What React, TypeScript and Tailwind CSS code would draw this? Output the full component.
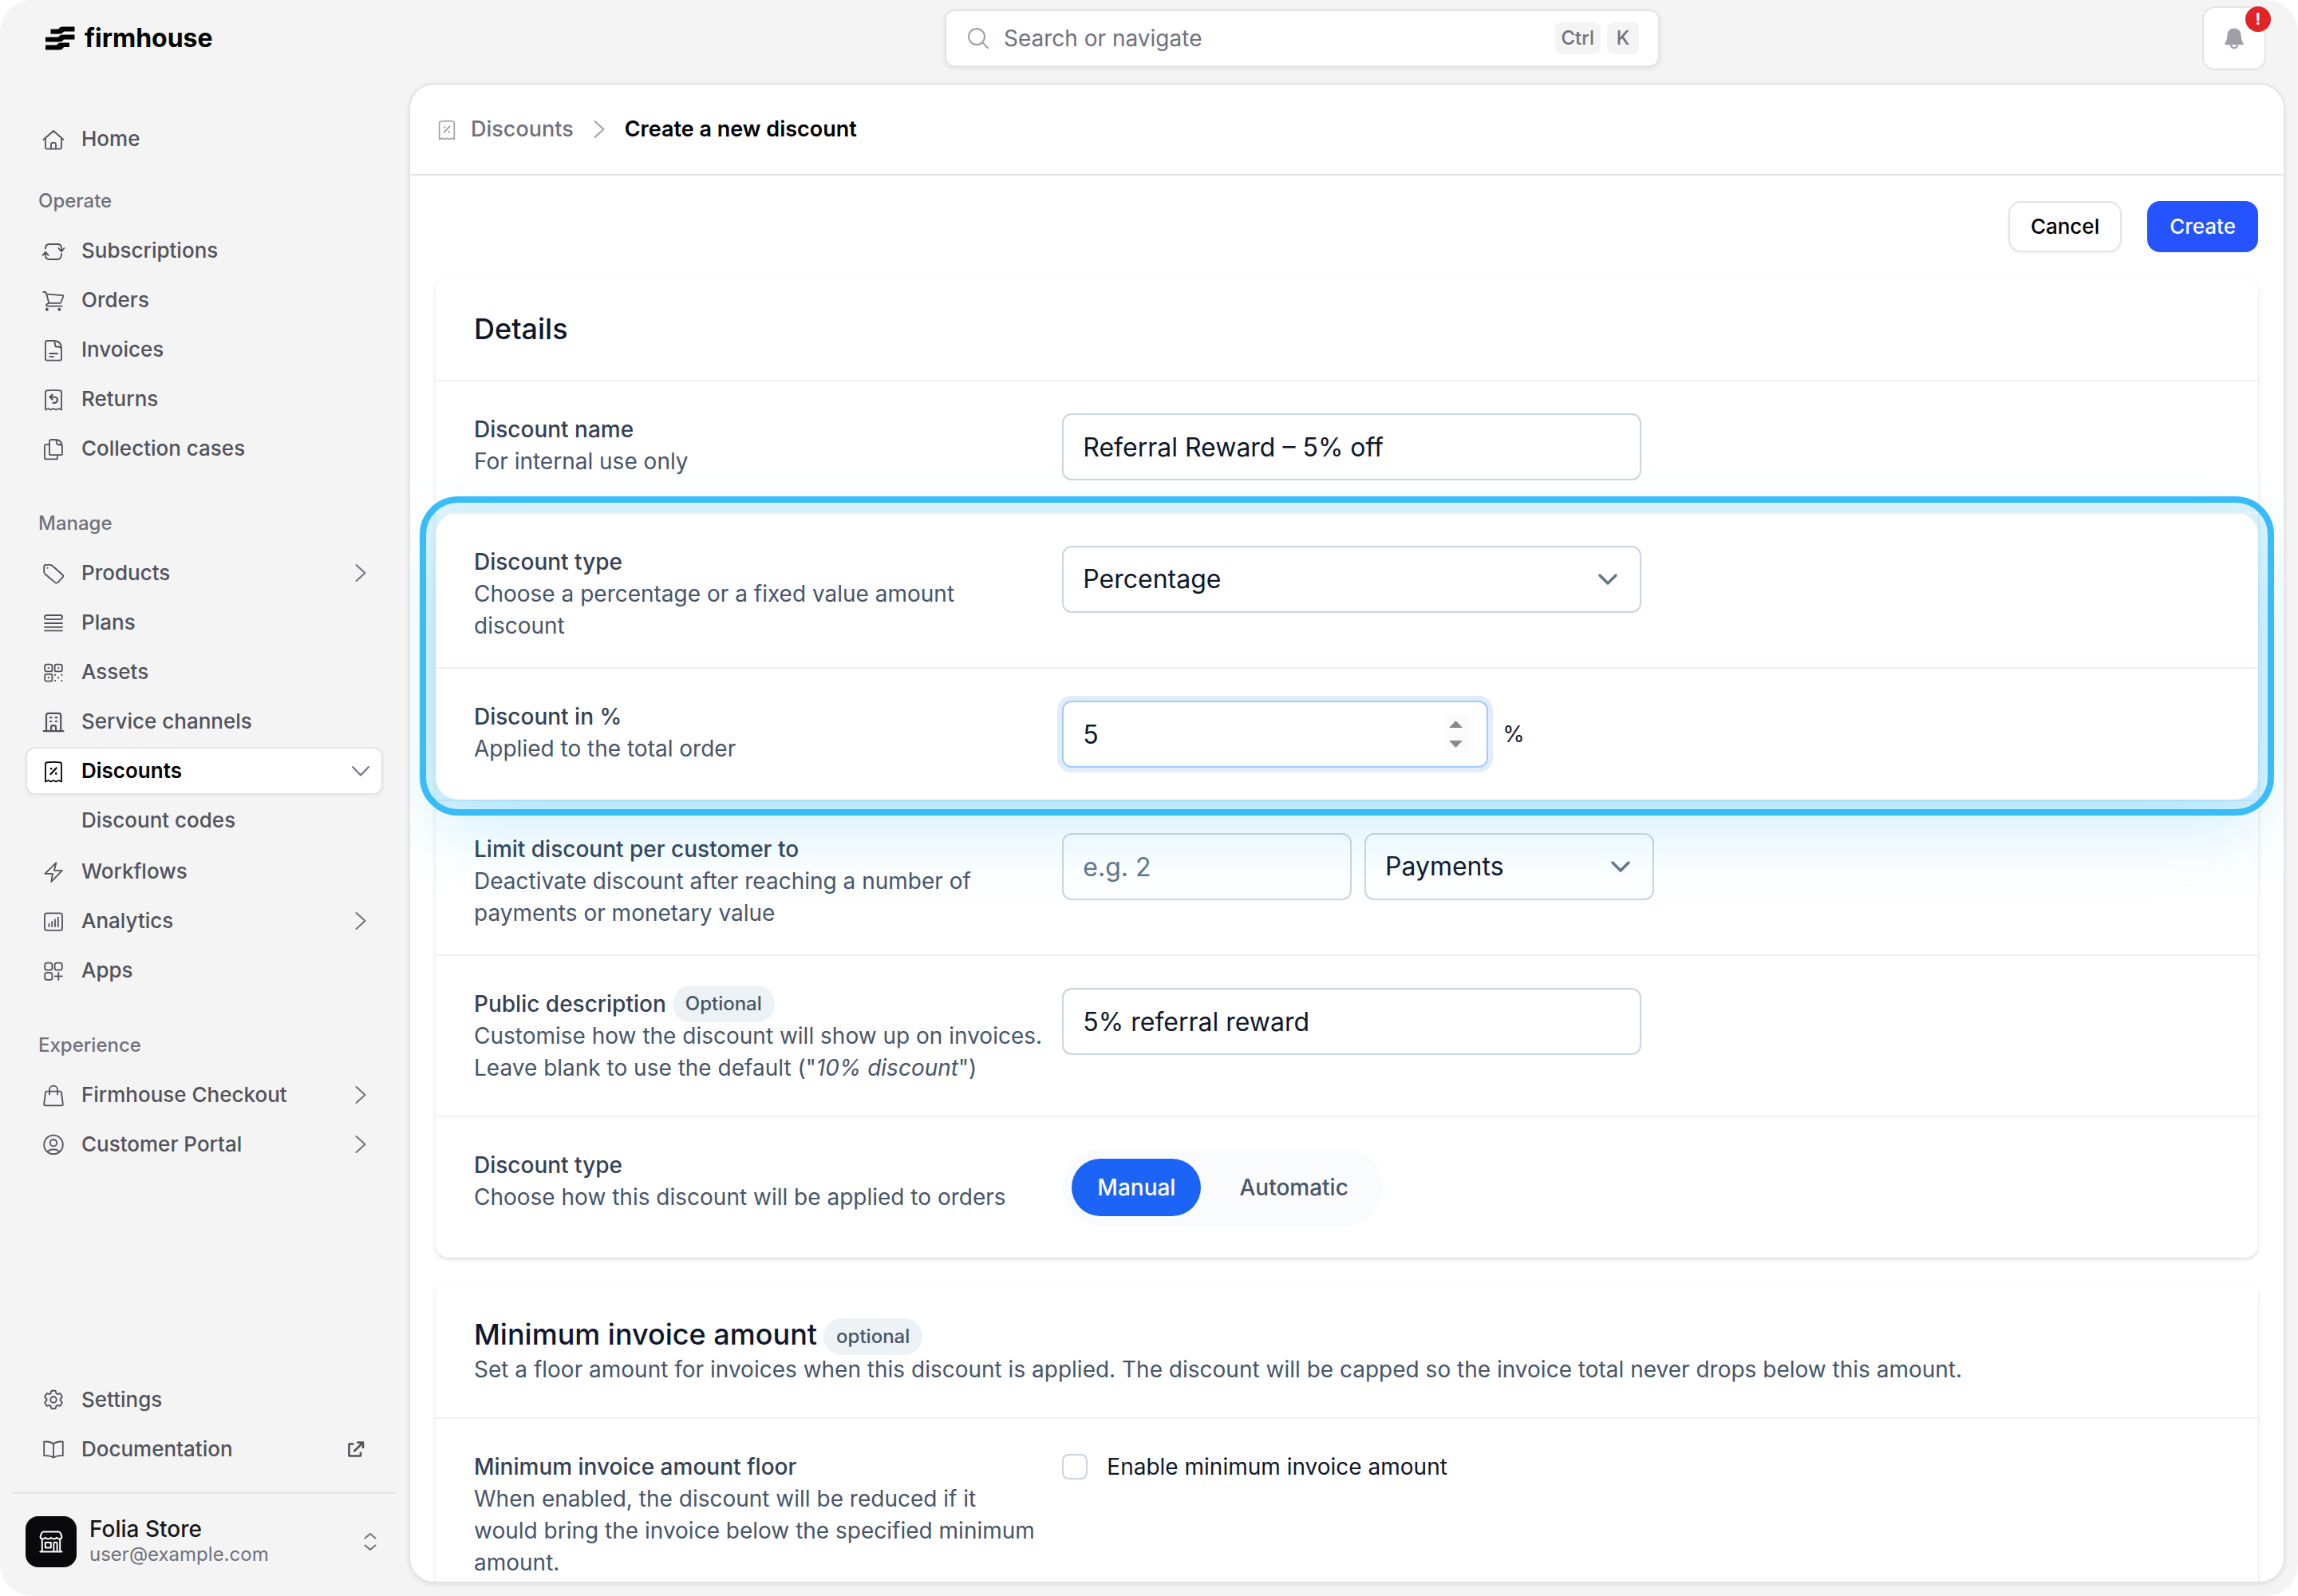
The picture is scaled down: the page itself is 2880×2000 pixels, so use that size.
import React, { useState } from 'react';
import { HiOutlineCog6Tooth } from 'react-icons/hi2';

type IconName =
  | 'home' | 'subscriptions' | 'orders' | 'invoices' | 'returns' | 'collections'
  | 'products' | 'plans' | 'assets' | 'channels' | 'discounts' | 'workflows'
  | 'analytics' | 'apps' | 'checkout' | 'portal' | 'docs';

const RECEIPT = 'M5 28.5V6.5Q5 4.6 7 4.3Q15 3.3 23 4.3Q25 4.6 25 6.5V28.5L21.5 27L18.2 28.5L15 27L11.8 28.5L8.5 27Z';

const ICONS: Record<IconName, React.ReactNode> = {
  home: <path d="M2.5 16L15 5L27.5 16M5 14V25.6a2 2 0 0 0 2 2H23a2 2 0 0 0 2-2V14M12 27.5V21.8a2 2 0 0 1 2-2h2a2 2 0 0 1 2 2V27.5" />,
  subscriptions: (
    <>
      <path d="M5 12.5Q5 7 10 7H20Q25 7 25 12V16M21.3 12L25 16.2L28.5 12" />
      <path d="M25 19Q25 26 20 26H10Q5 26 5 21V16.8M1.5 20.8L5 16.8L8.7 20.8" />
    </>
  ),
  orders: (
    <>
      <path d="M2.3 5H4.5Q5.6 5 6 6.5L9.3 18.8H23.3Q24 18.8 24.3 18L27.4 10Q27.6 9.3 26.8 9.2L6.6 7.6M9.3 18.8L6.6 20.2Q6 20.6 6 21.4Q6 22.6 7.2 22.6H25.5" />
      <circle cx="6.8" cy="26.8" r="1.1" fill="currentColor" />
      <circle cx="22.4" cy="26.8" r="1.1" fill="currentColor" />
    </>
  ),
  invoices: (
    <path d="M7 4H14.5Q25 4 25 14V26.6a2 2 0 0 1-2 2H7a2 2 0 0 1-2-2V6a2 2 0 0 1 2-2ZM15.5 4Q17 5.5 17 8V9.5Q17 11.5 19 11.5H21Q23.8 11.8 24.8 13.6M10.3 20H20M10.3 23.8H15" />
  ),
  returns: (
    <>
      <path d={RECEIPT} />
      <path d="M13.6 9.5L10.6 12.5L13.6 15.5M10.8 12.5H16Q20 12.8 20 16Q20 19.6 16 19.8H14.5" strokeWidth="2.2" />
    </>
  ),
  collections: (
    <path d="M10 9.8H6a2 2 0 0 0-2 2V26.4a2 2 0 0 0 2 2H18a2 2 0 0 0 2-2V23.2M12 4H17Q26 4 26 12.5V21.2a2 2 0 0 1-2 2H12a2 2 0 0 1-2-2V6a2 2 0 0 1 2-2ZM17.8 4.3Q19 5.5 19 7.2V8.5Q19 10 20.5 10H22.5Q25 10.4 25.8 12" />
  ),
  products: (
    <>
      <path d="M5.5 4.8H10.8Q12.4 4.8 13.6 6L26.4 17.2Q28 18.8 26.4 20.6L20.6 26.8Q18.8 28.4 17 26.9L4.4 16.2Q3.2 15 3.2 13.4V7.2Q3.2 4.8 5.5 4.8Z" />
      <circle cx="7.3" cy="8.8" r="0.5" fill="currentColor" strokeWidth="1" />
    </>
  ),
  plans: (
    <>
      <rect x="4" y="6" width="22" height="5.2" rx="2.4" />
      <path d="M4 16H26M4 20.8H26M4 25.4H26" />
    </>
  ),
  assets: (
    <>
      <rect x="4.2" y="5.6" width="9.2" height="8.8" rx="2" />
      <rect x="16.6" y="5.6" width="9.2" height="8.8" rx="2" />
      <rect x="4.2" y="17.8" width="9.2" height="8.8" rx="2" />
      <path strokeWidth="2.2" d="M8.8 10H8.9M21.2 10H21.3M8.8 22.2H8.9M17 18.8H17.1M21 22.2H21.1M25.4 18.8H25.5M17 26H17.1M25.4 26H25.5" />
    </>
  ),
  channels: (
    <>
      <path strokeWidth="2.2" d="M6 27V7.5Q6 4.8 8.6 4.8H21.6Q24.2 4.8 24.2 7.5V27M2.6 27.2H27.4M12 27V22.4Q12 20.2 14.2 20.2H15.8Q18 20.2 18 22.4V27" />
      <path strokeWidth="2.2" d="M11 10.2H12.4M17.8 10.2H19.2M11 15H12.4M17.8 15H19.2" />
    </>
  ),
  discounts: (
    <>
      <path d={RECEIPT} />
      <path strokeWidth="2" d="M18.8 11.2L11.4 19.2" />
      <path strokeWidth="2.6" d="M12 12.2H12.1M18.2 18.4H18.3" />
    </>
  ),
  workflows: <path d="M18.3 4.2L4.4 17.8H14L12.3 28L25.8 13.8H16Z" />,
  analytics: (
    <>
      <rect x="4" y="5.4" width="22" height="21.4" rx="2.6" />
      <path d="M9.4 18.8V22M13.2 16V22M17 13.4V22M20.8 10.6V22" />
    </>
  ),
  apps: (
    <>
      <rect x="4.2" y="5.6" width="9.2" height="9" rx="2.6" />
      <rect x="16.6" y="5.6" width="9.2" height="9" rx="2.6" />
      <rect x="4.2" y="17.8" width="9.2" height="9" rx="2.6" />
      <path d="M21.3 17.8V26.8M16.8 22.3H25.8" />
    </>
  ),
  checkout: (
    <path d="M6.8 10.6H23.2Q24.8 10.6 25 12L26.8 26.6Q27 28.4 25.2 28.4H4.8Q3 28.4 3.2 26.6L5 12Q5.2 10.6 6.8 10.6ZM10 14.4V8.6a5 5 0 0 1 10 0V14.4" />
  ),
  portal: (
    <>
      <circle cx="15" cy="15.4" r="11.8" />
      <circle cx="15" cy="13.2" r="4.2" />
      <path d="M7.6 24.4Q10 21.4 15 21.4T22.4 24.4" />
    </>
  ),
  docs: <path d="M15 8.6Q11 5 3.2 5.6V23.2Q11 22.6 15 25.6Q19 22.6 26.8 23.2V5.6Q19 5 15 8.6V25.6" />,
};

const Icon = ({ name, className = 'size-[30px]' }: { name: IconName; className?: string }) => (
  <svg viewBox="0 0 30 30" className={`shrink-0 ${className}`} fill="none" stroke="currentColor" strokeWidth="1.8" strokeLinecap="round" strokeLinejoin="round" aria-hidden="true">
    {ICONS[name]}
  </svg>
);

const ChevronRight = ({ className = '' }: { className?: string }) => (
  <svg viewBox="0 0 24 24" className={`size-6 shrink-0 ${className}`} fill="none" stroke="currentColor" strokeWidth="2" strokeLinecap="round" strokeLinejoin="round" aria-hidden="true">
    <path d="M6.5 2L17.5 12L6.5 22" />
  </svg>
);

const ChevronDown = () => (
  <svg viewBox="0 0 24 24" className="size-6 shrink-0" fill="none" stroke="currentColor" strokeWidth="2" strokeLinecap="round" strokeLinejoin="round" aria-hidden="true">
    <path d="M2 7L12 17.5L22 7" />
  </svg>
);

type NavEntry = { label: string; icon: IconName; chevron?: boolean; active?: boolean; children?: string[] };

const SECTIONS: { title?: string; items: NavEntry[] }[] = [
  { items: [{ label: 'Home', icon: 'home' }] },
  {
    title: 'Operate',
    items: [
      { label: 'Subscriptions', icon: 'subscriptions' },
      { label: 'Orders', icon: 'orders' },
      { label: 'Invoices', icon: 'invoices' },
      { label: 'Returns', icon: 'returns' },
      { label: 'Collection cases', icon: 'collections' },
    ],
  },
  {
    title: 'Manage',
    items: [
      { label: 'Products', icon: 'products', chevron: true },
      { label: 'Plans', icon: 'plans' },
      { label: 'Assets', icon: 'assets' },
      { label: 'Service channels', icon: 'channels' },
      { label: 'Discounts', icon: 'discounts', active: true, children: ['Discount codes'] },
      { label: 'Workflows', icon: 'workflows' },
      { label: 'Analytics', icon: 'analytics', chevron: true },
      { label: 'Apps', icon: 'apps' },
    ],
  },
  {
    title: 'Experience',
    items: [
      { label: 'Firmhouse Checkout', icon: 'checkout', chevron: true },
      { label: 'Customer Portal', icon: 'portal', chevron: true },
    ],
  },
];

const navRow = 'flex h-[60px] items-center gap-5 rounded-xl px-5 text-[26px] leading-10';

const NavItem = ({ item }: { item: NavEntry }) => (
  <li>
    <a
      href="#"
      className={`${navRow} ${item.active ? 'border-2 border-[#e4e4e4] bg-white px-[18px] font-semibold text-black shadow-[0_2px_4px_rgba(0,0,0,0.05)]' : 'font-medium text-[#52525b]'}`}
    >
      <Icon name={item.icon} />
      <span className="flex-1">{item.label}</span>
      {item.chevron && <ChevronRight className="-mr-1 text-[#71717b]" />}
      {item.active && <span className="-mr-1 text-[#71717b]"><ChevronDown /></span>}
    </a>
    {item.children && (
      <ul className="my-0.5">
        {item.children.map((child) => (
          <li key={child}>
            <a href="#" className="flex h-[60px] items-center pl-[70px] text-[26px] leading-10 font-medium text-[#52525b]">{child}</a>
          </li>
        ))}
      </ul>
    )}
  </li>
);

const Sidebar = () => (
  <aside className="flex w-128 shrink-0 flex-col">
    <div className="flex h-24 items-center gap-3 pl-14">
      <svg viewBox="0 0 38 30" className="h-[30px] w-[38px]" fill="black" aria-hidden="true">
        <path d="M7.5 3.5H17Q19 0.5 22.5 0.5H37.5V6.5H24Q22 9.5 18.5 9.5H7.5Z" />
        <path d="M1 13.5H17Q19 10.5 22.5 10.5H37.5V16.5H24Q22 19.5 18.5 19.5H1Z" />
        <path d="M1 23.5H15Q17 20.5 20.5 20.5H31V26H24Q22 29.5 18.5 29.5H1Z" />
      </svg>
      <span className="text-[32px] leading-10 font-bold text-black">firmhouse</span>
    </div>

    <nav className="mt-12 px-8">
      {SECTIONS.map((section, idx) => (
        <div key={idx}>
          {section.title && (
            <h2 className={`mb-3 pl-4 text-[24px] leading-10 font-medium text-[#71717b] ${idx === 1 ? 'mt-7' : 'mt-11'}`}>{section.title}</h2>
          )}
          <ul className="flex flex-col gap-0.5">
            {section.items.map((item) => <NavItem key={item.label} item={item} />)}
          </ul>
        </div>
      ))}
    </nav>

    <div className="mt-auto flex flex-col gap-0.5 px-8">
      <a href="#" className={`${navRow} font-medium text-[#52525b]`}>
        <HiOutlineCog6Tooth className="size-[30px] shrink-0" />
        Settings
      </a>
      <a href="#" className={`${navRow} font-medium text-[#52525b]`}>
        <Icon name="docs" />
        <span className="flex-1">Documentation</span>
        <svg viewBox="0 0 24 24" className="mr-0.5 size-6" fill="none" stroke="currentColor" strokeWidth="2.6" strokeLinejoin="round" aria-hidden="true">
          <path d="M9.5 5.5H3.5V20.5H18V15.5M9.5 15L20.5 4M13.5 3.6H21V11" />
        </svg>
      </a>
    </div>

    <div className="mx-4 mt-6 border-t-2 border-[#e4e4e4]">
      <button type="button" className="flex w-full items-center gap-4 px-4 pt-7 pb-9 text-left">
        <span className="flex size-16 items-center justify-center rounded-2xl bg-[#09090b] text-white">
          <svg viewBox="0 0 30 30" className="size-[30px]" fill="none" stroke="currentColor" strokeWidth="2" strokeLinecap="round" strokeLinejoin="round" aria-hidden="true">
            <path d="M5.5 2.6H24.5Q26 2.6 27 4.6L28.4 8.4Q28.4 11.4 25.6 11.4Q23.4 11.4 22 9.8Q20.6 11.4 18.6 11.4Q16.4 11.4 15 9.8Q13.6 11.4 11.4 11.4Q9.4 11.4 8 9.8Q6.6 11.4 4.4 11.4Q1.6 11.4 1.6 8.4L3 4.6Q4 2.6 5.5 2.6ZM3.8 12V27M26.2 12V27M1.4 27.4H28.6M7.8 16H14.8V22.4H7.8ZM18.4 27V17.4Q18.4 15.8 20 15.8H21Q22.6 15.8 22.6 17.4V27" />
          </svg>
        </span>
        <span className="flex flex-1 flex-col">
          <span className="leading-8 font-medium text-[#18181b]">Folia Store</span>
          <span className="text-[24px] leading-8 text-[#71717b]">user@example.com</span>
        </span>
        <svg viewBox="0 0 24 24" className="mr-1 size-6 text-[#71717b]" fill="none" stroke="currentColor" strokeWidth="2" strokeLinecap="round" strokeLinejoin="round" aria-hidden="true">
          <path d="M5.5 7.5L12 2L18.5 7.5M5.5 16.5L12 22L18.5 16.5" />
        </svg>
      </button>
    </div>
  </aside>
);

const TopBar = () => (
  <header className="flex h-[104px] items-start gap-2 pt-2 pr-10">
    <div className="flex flex-1 justify-center pt-1">
      <label className="flex h-[72px] w-full max-w-4xl items-center gap-[18px] rounded-xl border-2 border-[#e4e4e4] bg-white pr-6 pl-[26px] shadow-[0_2px_6px_rgba(0,0,0,0.08)]">
        <svg viewBox="0 0 28 28" className="size-7 shrink-0 text-[#9f9fa9]" fill="none" stroke="currentColor" strokeWidth="2" strokeLinecap="round" aria-hidden="true">
          <circle cx="12" cy="12" r="10" />
          <path d="M19.5 19.5L26 26" />
        </svg>
        <input type="search" aria-label="Search or navigate" placeholder="Search or navigate" className="min-w-0 flex-1 bg-transparent outline-none placeholder:text-[#71717b]" />
        <span className="flex gap-2 text-[24px] font-medium text-[#71717b]">
          <kbd className="flex h-10 items-center rounded-lg bg-[#f4f4f5] px-2 font-[Inter]">Ctrl</kbd>
          <kbd className="flex h-10 w-10 items-center justify-center rounded-lg bg-[#f4f4f5] font-[Inter]">K</kbd>
        </span>
      </label>
    </div>
    <button type="button" aria-label="Notifications" className="relative flex size-20 items-center justify-center rounded-2xl border-2 border-[#e4e4e4] bg-white">
      <svg viewBox="0 0 28 28" className="size-7" aria-hidden="true">
        <path fill="#9f9fa9" d="M14 1.4C19 1.4 22 4.6 22.4 9C22.7 14 23.4 17 25.6 20.4Q26.2 22 24.6 22H3.4Q1.8 22 2.4 20.4C4.6 17 5.3 14 5.6 9C6 4.6 9 1.4 14 1.4Z" />
        <path fill="none" stroke="#9f9fa9" strokeWidth="2.2" d="M9.8 21.5Q10.4 26.2 14 26.2Q17.6 26.2 18.2 21.5" />
      </svg>
      <span className="absolute -top-0.5 -right-2 flex size-8 items-center justify-center rounded-full bg-[#e12427] text-[20px] leading-none font-bold text-white">!</span>
    </button>
  </header>
);

const Pill = ({ children }: { children: React.ReactNode }) => (
  <span className="flex h-[46px] items-center rounded-full bg-[#edf2f6] px-4 text-[24px] font-medium text-[#475569]">{children}</span>
);

type RowProps = {
  id: string;
  label: string;
  pill?: string;
  hint: React.ReactNode;
  className?: string;
  children: React.ReactNode;
};

const FormRow = ({ id, label, pill, hint, className = 'pb-8', children }: RowProps) => (
  <div className={`grid grid-cols-3 gap-x-6 border-t-2 border-[#ebf1f5] px-12 pt-10 ${className}`}>
    <div className="leading-10">
      <div className="flex h-10 items-center gap-2">
        <label htmlFor={id} className="font-medium text-[#334155]">{label}</label>
        {pill && <Pill>{pill}</Pill>}
      </div>
      <p className="text-[#475569]">{hint}</p>
    </div>
    <div className="col-span-2 pb-2">{children}</div>
  </div>
);

const field = 'h-[84px] rounded-xl border-2 border-[#cbd5e1] bg-white px-6 text-[32px] text-[#0f172a] outline-none placeholder:text-[#64748b]';

const SelectField = ({ id, label, options, className }: { id: string; label?: string; options: string[]; className: string }) => (
  <div className={`relative ${className}`}>
    <select id={id} aria-label={label} className={`${field} w-full appearance-none`}>
      {options.map((option) => <option key={option}>{option}</option>)}
    </select>
    <svg viewBox="0 0 24 24" className="pointer-events-none absolute top-[30px] right-[30px] size-6 text-[#64748b]" fill="none" stroke="currentColor" strokeWidth="3.4" strokeLinecap="round" strokeLinejoin="round" aria-hidden="true">
      <path d="M2 7L12 17L22 7" />
    </svg>
  </div>
);

const card = 'rounded-2xl bg-white shadow-[0_2px_6px_rgba(0,0,0,0.1),0_2px_4px_-2px_rgba(0,0,0,0.1)]';

const App: React.FC = () => {
  const [name, setName] = useState('Referral Reward – 5% off');
  const [amount, setAmount] = useState('5');
  const [description, setDescription] = useState('5% referral reward');
  const [mode, setMode] = useState('Manual');

  return (
    <div className="h-screen bg-white font-[Inter,sans-serif] text-[28px] leading-10">
      <div className="flex h-full overflow-hidden rounded-[40px] bg-[#f4f4f4]">
        <Sidebar />
        <div className="flex min-w-0 flex-1 flex-col">
          <TopBar />
          <main className="mr-4 mb-4 flex min-h-0 flex-1 flex-col overflow-hidden rounded-[32px] border-2 border-[#e4e4e4] bg-white shadow-[0_2px_6px_rgba(0,0,0,0.08)]">
            <nav aria-label="Breadcrumb" className="flex h-[114px] shrink-0 items-center border-b-2 border-[#e4e4e4] px-8 text-[27px] font-medium">
              <a href="#" className="flex items-center gap-4 text-[#71717b]">
                <Icon name="discounts" className="size-7 text-[#9f9fa9]" />
                Discounts
              </a>
              <ChevronRight className="mx-5 text-[#9f9fa9]" />
              <span className="font-semibold text-black">Create a new discount</span>
            </nav>

            <form className="flex flex-col gap-8 p-8" onSubmit={(e) => e.preventDefault()}>
              <div className="flex justify-end gap-8 text-[26px] font-medium">
                <button type="button" className="h-16 rounded-2xl border-2 border-[#e4e4e4] bg-white px-[26px] text-black shadow-[0_2px_4px_rgba(0,0,0,0.05)]">Cancel</button>
                <button type="submit" className="h-16 rounded-2xl bg-[#2453ff] px-7 text-white">Create</button>
              </div>

              <section className={card}>
                <h2 className="px-12 py-10 text-[36px] leading-12 font-medium text-[#0f172a]">Details</h2>
                <FormRow id="name" label="Discount name" hint="For internal use only">
                  <input id="name" type="text" value={name} onChange={(e) => setName(e.target.value)} className={`${field} w-1/2`} />
                </FormRow>

                {/* Spotlight around the value settings */}
                <div className="relative z-10 rounded-[28px] outline-8 outline-offset-[12px] outline-[#38bdf8] shadow-[0_0_0_14px_rgba(56,189,248,0.18),0_36px_90px_rgba(56,189,248,0.24)]">
                  <FormRow id="type" label="Discount type" hint="Choose a percentage or a fixed value amount discount">
                    <SelectField id="type" options={['Percentage', 'Fixed amount']} className="w-1/2" />
                  </FormRow>
                  <FormRow id="amount" label="Discount in %" hint="Applied to the total order">
                    <div className="flex items-center gap-[18px]">
                      <div className="relative w-[534px]">
                        <input
                          id="amount"
                          type="number"
                          value={amount}
                          onChange={(e) => setAmount(e.target.value)}
                          className="h-[84px] w-full rounded-xl border-2 border-[#a3cbfa] bg-white px-6 text-[32px] text-[#0f172a] ring-6 ring-[#e0edfe] outline-none [appearance:textfield] [&::-webkit-inner-spin-button]:appearance-none"
                        />
                        <svg viewBox="0 0 30 48" className="absolute top-[18px] right-6 h-12 w-[30px] bg-[#fbfbfb]" fill="#8b8b8b" aria-hidden="true">
                          <path d="M5 16L13.5 7L22 16ZM5 32L13.5 41L22 32Z" />
                        </svg>
                      </div>
                      <span className="text-[#0f172a]">%</span>
                    </div>
                  </FormRow>
                </div>

                <FormRow id="limit" label="Limit discount per customer to" hint="Deactivate discount after reaching a number of payments or monetary value">
                  <div className="flex gap-4">
                    <input id="limit" type="text" placeholder="e.g. 2" className={`${field} w-1/4`} />
                    <SelectField id="limit-unit" label="Limit unit" options={['Payments', 'Amount']} className="w-1/4" />
                  </div>
                </FormRow>
                <FormRow
                  id="description"
                  label="Public description"
                  pill="Optional"
                  className="pb-10"
                  hint={<>Customise how the discount will show up on invoices. Leave blank to use the default ("<em>10% discount</em>")</>}
                >
                  <input id="description" type="text" value={description} onChange={(e) => setDescription(e.target.value)} className={`${field} w-1/2`} />
                </FormRow>
                <FormRow id="mode-Manual" label="Discount type" hint="Choose how this discount will be applied to orders">
                  <div className="flex h-24 w-fit items-center gap-4 rounded-full bg-[#fafbfd] px-3 font-medium">
                    {['Manual', 'Automatic'].map((option) => (
                      <label
                        key={option}
                        className={`flex h-18 items-center rounded-full px-8 ${mode === option ? 'bg-[#1c64f5] text-white' : 'text-[#475569]'}`}
                      >
                        <input id={`mode-${option}`} type="radio" name="mode" className="sr-only" checked={mode === option} onChange={() => setMode(option)} />
                        {option}
                      </label>
                    ))}
                  </div>
                </FormRow>
              </section>

              <section className={card}>
                <div className="px-12 py-10">
                  <div className="flex h-12 items-start gap-2">
                    <h2 className="text-[36px] leading-12 font-medium text-[#0f172a]">Minimum invoice amount</h2>
                    <div className="mt-1"><Pill>optional</Pill></div>
                  </div>
                  <p className="text-[#475569]">
                    Set a floor amount for invoices when this discount is applied. The discount will be capped so the invoice total never drops below this amount.
                  </p>
                </div>
                <FormRow
                  id="floor"
                  label="Minimum invoice amount floor"
                  hint="When enabled, the discount will be reduced if it would bring the invoice below the specified minimum amount."
                >
                  <label className="flex items-center gap-6 text-[#0f172a]">
                    <input id="floor" type="checkbox" className="size-8 appearance-none rounded-lg border-2 border-[#cbd5e1] bg-white checked:bg-[#1c64f5]" />
                    Enable minimum invoice amount
                  </label>
                </FormRow>
              </section>
            </form>
          </main>
        </div>
      </div>
    </div>
  );
};

export default App;
